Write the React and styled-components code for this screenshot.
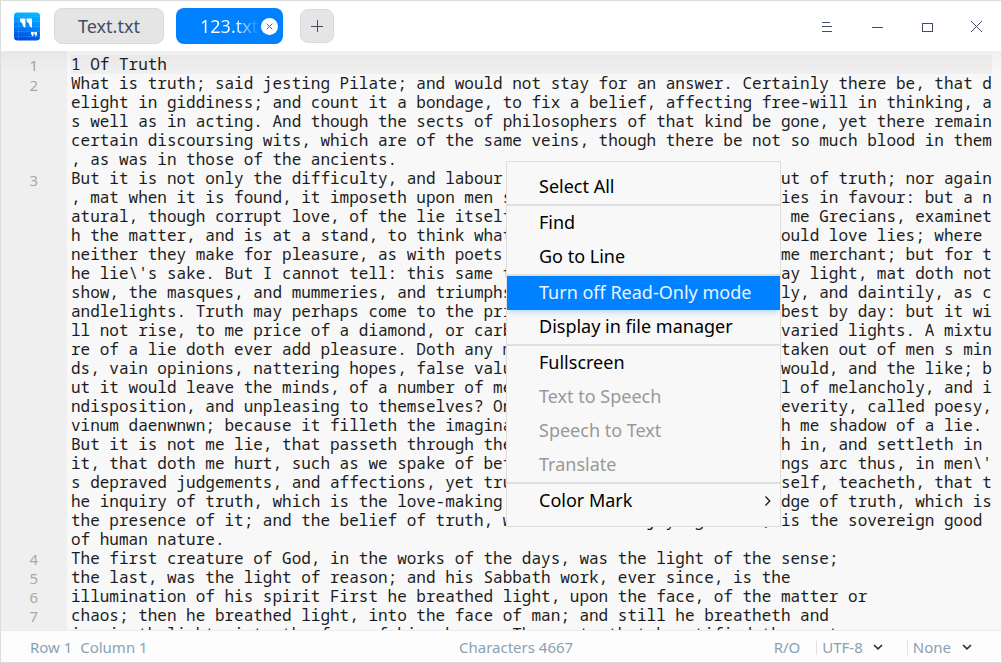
import React from 'react';
import styled, { createGlobalStyle, css } from 'styled-components';

const GlobalStyle = createGlobalStyle`
  * { box-sizing: border-box; }
  body { margin: 0; font-family: 'Noto Sans', sans-serif; overflow: hidden; }
`;

const Window = styled.div`
  position: relative;
  width: 1002px;
  height: 663px;
  display: flex;
  flex-direction: column;
  border: 1px solid #dcdcdc;
  background: #f8f8f8;
  overflow: hidden;
`;

const TitleBar = styled.header`
  flex: none;
  height: 50px;
  display: flex;
  align-items: center;
  padding: 0 14px 0 13px;
  background: #fff;
`;

const Logo = styled.svg`
  flex: none;
  width: 26px;
  height: 29px;
  margin-right: 14px;
`;

const Tab = styled.div`
  flex: none;
  display: flex;
  align-items: center;
  height: 36px;
  border-radius: 8px;
  font-size: 18px;
  line-height: 36px;
  ${({ $active }) =>
    $active
      ? css`
          width: 107px;
          margin-left: 12px;
          padding: 0 5.5px 0 24px;
          background: #0081ff;
          color: #fff;
        `
      : css`
          width: 110px;
          justify-content: center;
          background: #e5e5e5;
          border: 1px solid #dadada;
          color: #414d68;
        `}
`;

const FadedLabel = styled.span`
  width: 58px;
  overflow: hidden;
  white-space: nowrap;
  background: linear-gradient(90deg, #fff 60%, rgba(255, 255, 255, 0.05) 100%);
  background-clip: text;
  -webkit-background-clip: text;
  color: transparent;
`;

const TabClose = styled.svg`
  flex: none;
  width: 17px;
  height: 17px;
  margin-left: auto;
`;

const AddButton = styled.button`
  width: 34px;
  height: 34px;
  margin-left: 17px;
  padding: 0;
  display: flex;
  align-items: center;
  justify-content: center;
  border: 1px solid #dadada;
  border-radius: 8px;
  background: #e5e5e5;
`;

const WindowControls = styled.div`
  display: flex;
  margin-left: auto;
  margin-right: -14px;
`;

const ControlIcon = styled.svg`
  width: 50px;
  height: 50px;
  fill: none;
  stroke: #414d68;
  shape-rendering: ${({ $smooth }) => ($smooth ? 'auto' : 'crispEdges')};
`;

const Editor = styled.main`
  flex: 1;
  min-height: 0;
  display: flex;
  overflow: hidden;
  position: relative;

  &::after {
    content: '';
    position: absolute;
    inset: 0 0 auto 0;
    height: 22px;
    background: linear-gradient(rgba(0, 0, 0, 0.032), rgba(0, 0, 0, 0));
  }
`;

const Gutter = styled.div`
  flex: none;
  width: 66px;
  padding-top: 3px;
  background: #efefef;
  font-size: 15px;
  color: #a9a9a9;
`;

const LineNumber = styled.div`
  height: ${({ $rows }) => $rows * 19}px;
  padding: ${({ $offset }) => $offset}px 0 0 28.5px;
  line-height: 18px;
`;

const TextArea = styled.div`
  flex: 1;
  padding: 4px 9px 0 4px;
  font-family: 'Noto Sans Mono', 'Noto Mono', 'DejaVu Sans Mono', monospace;
  font-size: 16px;
  letter-spacing: -0.007px;
  color: #1c1c1c;
`;

const TextLine = styled.div`
  height: 19px;
  line-height: 19px;
  white-space: pre;
  background: ${({ $current }) => ($current ? '#efefef' : 'transparent')};
`;

const StatusBar = styled.footer`
  flex: none;
  height: 32px;
  display: grid;
  grid-template-columns: 429px 1fr auto;
  align-items: center;
  padding: 1px 29px 0 29px;
  border-top: 1px solid #ededed;
  background: #fdfdfd;
  color: #8aa1b4;
  font-size: 15px;
  white-space: pre;
`;

const StatusRight = styled.div`
  display: flex;
  align-items: center;
  justify-content: flex-end;
`;

const Divider = styled.i`
  width: 1px;
  height: 15px;
  margin: 0 5px 0 ${({ $gap }) => $gap}px;
  background: #e3e3e3;
`;

const Chevron = styled.svg`
  width: 10px;
  height: 8px;
  margin-left: ${({ $gap = 11 }) => $gap}px;
  fill: none;
  stroke: #303030;
  stroke-width: 1.7;
`;

const Menu = styled.nav`
  position: absolute;
  left: 505px;
  top: 160px;
  width: 275px;
  height: 366px;
  padding-top: 8px;
  border: 1px solid #dedede;
  background: #f8f8f8;
`;

const MenuItem = styled.div`
  position: relative;
  display: flex;
  align-items: center;
  justify-content: space-between;
  height: 34px;
  padding: 0 8px 1px 32px;
  font-size: 18px;
  line-height: 33px;
  color: ${({ $disabled }) => ($disabled ? '#999' : '#000')};
  ${({ $selected }) =>
    $selected &&
    css`
      color: #eaf4ff;
      background: #0081ff;
      box-shadow: 0 4px 6px -2px rgba(0, 129, 255, 0.3);
      clip-path: inset(0 0 -8px 0);
    `}
`;

const Separator = styled.div`
  height: 2px;
  background: #e0e0e0;
`;

// Each paragraph is a list of wrapped rows. A row given as an array has its
// last part starting at column 74.
const paragraphs = [
  ['1 Of Truth'],
  [
    'What is truth; said jesting Pilate; and would not stay for an answer. Certainly there be, that d',
    'elight in giddiness; and count it a bondage, to fix a belief, affecting free-will in thinking, a',
    's well as in acting. And though the sects of philosophers of that kind be gone, yet there remain',
    'certain discoursing wits, which are of the same veins, though there be not so much blood in them',
    ', as was in those of the ancients.',
  ],
  [
    ['But it is not only the difficulty, and labour,', 'ut of truth; nor again'],
    [', mat when it is found, it imposeth upon men s', 'ies in favour: but a n'],
    ['atural, though corrupt love, of the lie itself', ' me Grecians, examinet'],
    ['h the matter, and is at a stand, to think what', 'ould love lies; where '],
    ['neither they make for pleasure, as with poets,', 'me merchant; but for t'],
    ["he lie\\'s sake. But I cannot tell: this same t", 'ay light, mat doth not'],
    ['show, the masques, and mummeries, and triumphs', 'ly, and daintily, as c'],
    ['andlelights. Truth may perhaps come to the pri', 'best by day: but it wi'],
    ['ll not rise, to me price of a diamond, or carb', 'varied lights. A mixtu'],
    ['re of a lie doth ever add pleasure. Doth any m', 'taken out of men s min'],
    ['ds, vain opinions, nattering hopes, false valu', 'would, and the like; b'],
    ['ut it would leave the minds, of a number of me', 'l of melancholy, and i'],
    ['ndisposition, and unpleasing to themselves? On', 'everity, called poesy,'],
    ['vinum daenwnwn; because it filleth the imagina', 'h me shadow of a lie. '],
    ['But it is not me lie, that passeth through the', 'h in, and settleth in '],
    ['it, that doth me hurt, such as we spake of bef', "ngs arc thus, in men\\'"],
    ['s depraved judgements, and affections, yet tru', 'self, teacheth, that t'],
    ['he inquiry of truth, which is the love-making,', 'dge of truth, which is'],
    ['the presence of it; and the belief of truth, which is the enjoying of it, ', 'is the sovereign good '],
    'of human nature.',
  ],
  ['The first creature of God, in the works of the days, was the light of the sense;'],
  ['the last, was the light of reason; and his Sabbath work, ever since, is the'],
  ['illumination of his spirit First he breathed light, upon the face, of the matter or'],
  ['chaos; then he breathed light, into the face of man; and still he breatheth and'],
  ['inspireth light, into the face of his chosen. The poet, that beautified the sect'],
];

const rowText = (row) => (Array.isArray(row) ? row[0].padEnd(74) + row[1] : row);

const menuGroups = [
  [{ label: 'Select All' }],
  [{ label: 'Find' }, { label: 'Go to Line' }],
  [{ label: 'Turn off Read-Only mode', selected: true }, { label: 'Display in file manager' }],
  [
    { label: 'Fullscreen' },
    { label: 'Text to Speech', disabled: true },
    { label: 'Speech to Text', disabled: true },
    { label: 'Translate', disabled: true },
  ],
  [{ label: 'Color Mark', submenu: true }],
];

function AppLogo() {
  return (
    <Logo viewBox="0 0 26 29">
      <defs>
        <linearGradient id="logoFill" x1="0.6" y1="0" x2="0.4" y2="1">
          <stop offset="0" stopColor="#00bcff" />
          <stop offset="0.5" stopColor="#0084ff" />
          <stop offset="1" stopColor="#0048e0" />
        </linearGradient>
      </defs>
      <rect y="0.500" width="26" height="28" rx="3.500" fill="url(#logoFill)" />
      <path d="M0 4.500h26M0 9.500h26M0 14.500h26M0 19.500h26M0 24.500h26M4.500 0.500v28" stroke="#6cc4ff" strokeOpacity="0.28" strokeWidth="0.8" />
      <path d="M6 6.500h5.400v9.300c-2.300-.8-3-2.400-3-4.500C6.900 10.800 6 9.600 6 8zM12.600 6.500H18v9.300c-2.300-.8-3-2.400-3-4.500-1.500-.5-2.400-1.700-2.400-3.300z" fill="#fff" />
      <path d="M17 20h2.700v2c0 1.300-.8 2.300-2.200 2.600.5-.8.700-1.300.6-2.100H17zM20.300 20H23v2c0 1.300-.8 2.300-2.200 2.600.5-.8.700-1.300.6-2.100h-1.100z" fill="#fff" />
    </Logo>
  );
}

const numberOffsets = [2, 3, 3, 2, 2, 2, 2];

export default function App() {
  return (
    <Window>
      <GlobalStyle />
      <TitleBar>
        <AppLogo />
        <Tab>Text.txt</Tab>
        <Tab $active>
          <FadedLabel>123.txt</FadedLabel>
          <TabClose viewBox="0 0 17 17">
            <circle cx="8.500" cy="8.500" r="8.500" fill="#fff" />
            <path d="M5.700 5.700l5.600 5.600M11.300 5.700l-5.600 5.600" stroke="#414d68" strokeWidth="0.9" />
          </TabClose>
        </Tab>
        <AddButton>
          <svg width="12" height="12" viewBox="0 0 12 12" shapeRendering="crispEdges">
            <path d="M0 6.500h12M6.500 0v12" stroke="#414d68" />
          </svg>
        </AddButton>
        <WindowControls>
          <ControlIcon viewBox="0 0 50 50">
            <path d="M21 21.500h8M21 25.500h10M21 30.500h10" />
          </ControlIcon>
          <ControlIcon viewBox="0 0 50 50">
            <path d="M21 26.500h11" />
          </ControlIcon>
          <ControlIcon viewBox="0 0 50 50">
            <path d="M21.500 22.500h10v8h-10z" />
          </ControlIcon>
          <ControlIcon viewBox="0 0 50 50" $smooth>
            <path d="M20 20l11 11M31 20l-11 11" />
          </ControlIcon>
        </WindowControls>
      </TitleBar>

      <Editor>
        <Gutter>
          {paragraphs.slice(0, 7).map((rows, i) => (
            <LineNumber key={i} $rows={rows.length} $offset={numberOffsets[i]}>
              {i + 1}
            </LineNumber>
          ))}
        </Gutter>
        <TextArea>
          {paragraphs.flat().map((row, i) => (
            <TextLine key={i} $current={i === 0}>
              {rowText(row)}
            </TextLine>
          ))}
        </TextArea>
      </Editor>

      <StatusBar>
        <span>{'Row 1  Column 1'}</span>
        <span>Characters 4667</span>
        <StatusRight>
          R/O
          <Divider $gap={16} />
          UTF-8
          <Chevron $gap={10} viewBox="0 0 10 8"><path d="M1 2l4 3.800L9 2" /></Chevron>
          <Divider $gap={24} />
          None
          <Chevron viewBox="0 0 10 8"><path d="M1 2l4 3.800L9 2" /></Chevron>
        </StatusRight>
      </StatusBar>

      <Menu>
        {menuGroups.map((group, g) => (
          <React.Fragment key={g}>
            {g > 0 && <Separator />}
            {group.map((item) => (
              <MenuItem key={item.label} $selected={item.selected} $disabled={item.disabled}>
                {item.label}
                {item.submenu && (
                  <svg width="8" height="12" viewBox="0 0 8 12" fill="none" stroke="#111" strokeWidth="1.200">
                    <path d="M1.500 1.500L5.800 6l-4.300 4.500" />
                  </svg>
                )}
              </MenuItem>
            ))}
          </React.Fragment>
        ))}
      </Menu>
    </Window>
  );
}
